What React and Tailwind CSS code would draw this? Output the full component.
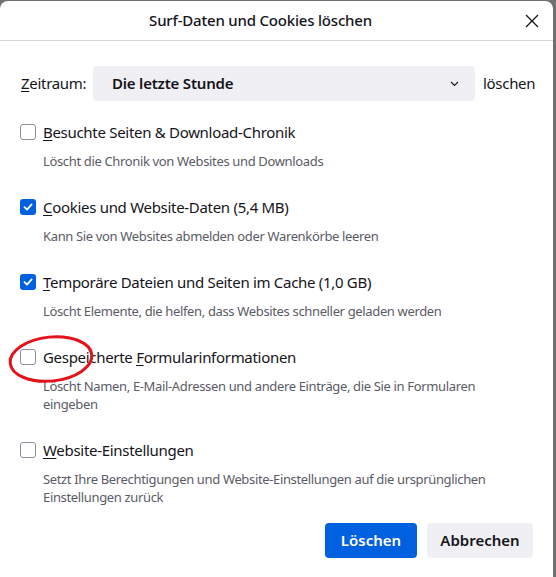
const items = [
  {
    pre: "",
    key: "B",
    rest: "esuchte Seiten & Download-Chronik",
    checked: false,
    desc: "Löscht die Chronik von Websites und Downloads",
  },
  {
    pre: "",
    key: "C",
    rest: "ookies und Website-Daten (5,4 MB)",
    checked: true,
    desc: "Kann Sie von Websites abmelden oder Warenkörbe leeren",
  },
  {
    pre: "",
    key: "T",
    rest: "emporäre Dateien und Seiten im Cache (1,0 GB)",
    checked: true,
    desc: "Löscht Elemente, die helfen, dass Websites schneller geladen werden",
  },
  {
    pre: "Gespeicherte ",
    key: "F",
    rest: "ormularinformationen",
    checked: false,
    desc: "Löscht Namen, E-Mail-Adressen und andere Einträge, die Sie in Formularen eingeben",
  },
  {
    pre: "",
    key: "W",
    rest: "ebsite-Einstellungen",
    checked: false,
    desc: "Setzt Ihre Berechtigungen und Website-Einstellungen auf die ursprünglichen Einstellungen zurück",
  },
]

const Checkbox = ({ checked }) => {
  if (checked) {
    return (
      <div className="w-4 h-4 rounded-[3px] bg-[#0061e0] flex items-center justify-center shrink-0">
        <svg width="12" height="12" viewBox="0 0 12 12">
          <path d="M2.5 6.2 L5 8.6 L9.6 3.4" fill="none" stroke="white" strokeWidth="1.8" strokeLinecap="round" strokeLinejoin="round" />
        </svg>
      </div>
    )
  }
  return <div className="w-4 h-4 rounded-[3px] border border-[#8f8f9d] bg-white shrink-0" />
}

const Item = ({ item }) => (
  <div className="flex flex-col">
    <div className="flex items-center h-5 gap-[7px]">
      <Checkbox checked={item.checked} />
      <span className="text-[15px] tracking-[-0.3px] text-[#15141a] leading-5">
        {item.pre}
        <span className="underline underline-offset-2 decoration-1">{item.key}</span>
        {item.rest}
      </span>
    </div>
    <p className="ml-[23px] mt-[10px] pr-[40px] text-[13px] tracking-[-0.35px] leading-[18px] text-[#5b5b66]">{item.desc}</p>
  </div>
)

export default function App() {
  return (
    <div className="w-[556px] h-[577px] bg-[#707070] pt-px pr-[3px] overflow-hidden" style={{ fontFamily: '"Noto Sans", "Open Sans", sans-serif' }}>
      <div className="relative bg-white rounded-t-[8px] h-full flex flex-col">
        <div className="h-10 border-b border-[#d7d7db] flex items-center justify-center relative">
          <span className="text-[15px] font-medium tracking-[-0.2px] text-[#15141a] ml-[-32px]">Surf-Daten und Cookies löschen</span>
          <svg className="absolute right-[14px] top-[13px]" width="14" height="14" viewBox="0 0 14 14">
            <path d="M1 1 L13 13 M13 1 L1 13" stroke="#15141a" strokeWidth="1.3" />
          </svg>
        </div>

        <div className="flex items-center mt-[25px] pl-[21px]">
          <span className="text-[15px] tracking-[-0.3px] text-[#15141a] w-[72px]">
            <span className="underline underline-offset-2 decoration-1">Z</span>eitraum:
          </span>
          <div className="w-[382px] h-[35px] rounded-[4px] bg-[#f0f0f4] flex items-center justify-between pl-[19px] pr-[16px]">
            <span className="text-[15px] font-semibold tracking-[-0.2px] text-[#15141a]">Die letzte Stunde</span>
            <svg width="9" height="6" viewBox="0 0 9 6">
              <path d="M1 1 L4.5 4.5 L8 1" fill="none" stroke="#15141a" strokeWidth="1.1" />
            </svg>
          </div>
          <span className="text-[15px] tracking-[-0.3px] text-[#15141a] ml-2">löschen</span>
        </div>

        <div className="flex flex-col gap-[27px] mt-[21px] pl-5">
          {items.map((item, i) => (
            <Item key={i} item={item} />
          ))}
        </div>

        <div className="flex justify-end gap-[10px] mt-auto mb-[19px] pr-5">
          <button className="w-[92px] h-[35px] rounded-[4px] bg-[#0061e0] text-white text-[15px] font-semibold">Löschen</button>
          <button className="w-[106px] h-[35px] rounded-[4px] bg-[#f0f0f4] text-[#15141a] text-[15px] font-semibold">Abbrechen</button>
        </div>

        <svg className="absolute left-[6px] top-[331px] pointer-events-none" width="90" height="54" viewBox="0 0 90 54">
          <ellipse cx="45" cy="27" rx="41" ry="22" fill="none" stroke="#e3131b" strokeWidth="3" transform="rotate(-6 45 27)" />
        </svg>
      </div>
    </div>
  )
}
